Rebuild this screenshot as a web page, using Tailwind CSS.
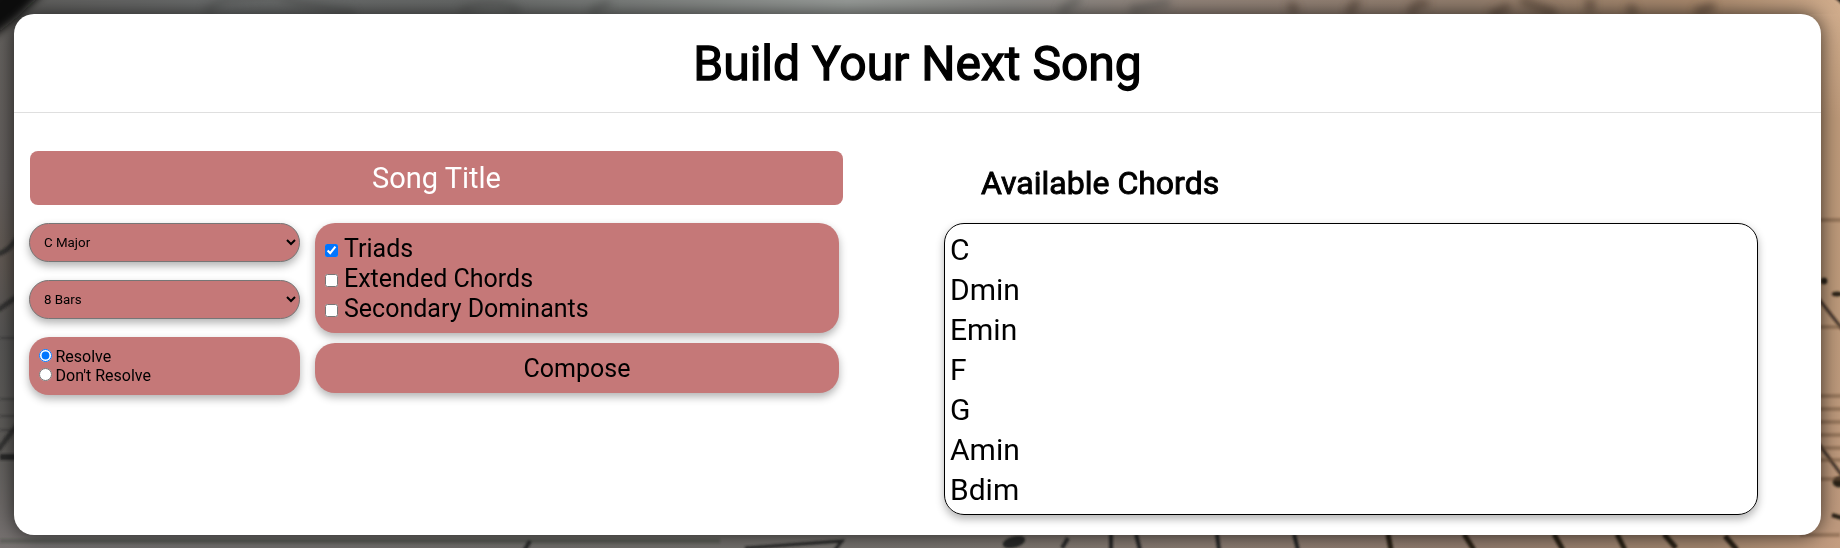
<!DOCTYPE html>
<html lang="en">
<head>
<meta charset="utf-8">
<title>Build Your Next Song</title>
<script src="https://cdn.jsdelivr.net/npm/@tailwindcss/browser@4"></script>
</head>
<body class="relative h-[548px] w-[1840px] overflow-hidden bg-[#6d6865] font-['Roboto',sans-serif] text-black">
  <!-- Sheet music backdrop -->
  <svg class="absolute inset-0" width="1840" height="548" viewBox="0 0 1840 548" aria-hidden="true">
    <defs>
      <linearGradient id="top"><stop offset="0" stop-color="#5f5e5c"/><stop offset=".12" stop-color="#6c6e6e"/><stop offset=".25" stop-color="#686a69"/><stop offset=".34" stop-color="#7d807e"/><stop offset=".46" stop-color="#9b9f9c"/><stop offset=".55" stop-color="#8d8c89"/><stop offset=".65" stop-color="#94857b"/><stop offset=".8" stop-color="#95806f"/><stop offset=".92" stop-color="#aa8a6e"/><stop offset="1" stop-color="#d0ac8c"/></linearGradient>
      <linearGradient id="bottom"><stop offset="0" stop-color="#737070"/><stop offset=".3" stop-color="#706e6b"/><stop offset=".5" stop-color="#77736f"/><stop offset=".65" stop-color="#8a7c72"/><stop offset=".8" stop-color="#937d6f"/><stop offset=".93" stop-color="#a4876f"/><stop offset="1" stop-color="#c49d80"/></linearGradient>
      <linearGradient id="left" x2="0" y2="1"><stop offset="0" stop-color="#65625f"/><stop offset=".3" stop-color="#645f5d"/><stop offset=".45" stop-color="#625a54"/><stop offset=".6" stop-color="#585756"/><stop offset=".8" stop-color="#5f5d5a"/><stop offset="1" stop-color="#777271"/></linearGradient>
      <linearGradient id="right" x2="0" y2="1"><stop offset="0" stop-color="#d0ac8c"/><stop offset=".2" stop-color="#bd9979"/><stop offset=".6" stop-color="#bd9a7b"/><stop offset="1" stop-color="#bf9a7e"/></linearGradient>
      <filter id="soft"><feGaussianBlur stdDeviation="1"/></filter>
      <filter id="softer"><feGaussianBlur stdDeviation="4"/></filter>
    </defs>
    <rect width="1840" height="274" fill="url(#top)"/>
    <rect y="274" width="1840" height="274" fill="url(#bottom)"/>
    <rect y="20" width="30" height="528" fill="url(#left)"/>
    <rect x="1810" y="14" width="30" height="520" fill="url(#right)"/>
    <path d="M-10-10H46C30 5 15 22-10 38Z" fill="#080908" filter="url(#softer)"/>
    <path d="M205 12l20-14 50-6 20 10 60 12M460 12q30-18 60 0M590 12l20-10M1060 12l20-14M1130 10l40-8" stroke="#4b4d4c" stroke-width="9" opacity=".45" fill="none" filter="url(#softer)"/>
    <path d="M1290 3l6 10M1358 0l-10 14M1410 14q8-16 18-8M1490 16l20-10M1520 0l36 14M1590-2v14M1628 6l8 8M1695 12l20-6" stroke="#4c3a2e" stroke-width="9" opacity=".6" fill="none" filter="url(#softer)"/>
    <path d="M1828-6Q1840 0 1850 14V-10Z" fill="#201a16" filter="url(#soft)"/>
    <g filter="url(#soft)" fill="none" stroke="#292b29">
      <path d="M-2 254Q12 250 20 232M-2 310l20-14M-2 450l20-26" stroke-width="5" opacity=".8"/>
      <path d="M0 457H20" stroke-width="6"/>
      <path d="M0 338H20M0 399H20M0 416H20M0 430H20" stroke-width="2" opacity=".4"/>
      <path d="M0 541H720" stroke-width="4" opacity=".25"/>
      <path d="M530 541l-6 10M1062 548l6-10M1111 534v16M1136 534l4 16M1217 534l2 16M1294 534l4 16" stroke-width="4"/>
      <path d="M745 548L842 541l-8 10" stroke-width="3"/>
      <ellipse cx="1014" cy="542" rx="11" ry="5" fill="#292b29" transform="rotate(-15 1014 542)"/>
    </g>
    <g filter="url(#soft)" fill="none" stroke="#2c2218">
      <path d="M1388 534l3 16M1464 534l10 16M1554 534l9 16M1617 534l8 16M1664 534l12 14M1725 536l12 14" stroke-width="5"/>
      <path d="M1818 298l25 32M1818 443l25 34" stroke-width="3" opacity=".8"/>
      <ellipse cx="1824" cy="281" rx="3" ry="3" fill="#2c2218"/>
      <ellipse cx="1837" cy="294" rx="5" ry="2" fill="#2c2218"/>
      <ellipse cx="1839" cy="482" rx="6" ry="5" fill="#2c2218"/>
      <path d="M1832 515l10 3" stroke-width="4"/>
    </g>
    <path d="M1818 220h24M1818 327h24M1818 396h24M1818 409h24M1818 422h24M1818 435h24M1818 448h24M1818 460h24M1818 479h24M1800 535h40" stroke="#73543e" stroke-width="4" opacity=".5" filter="url(#soft)"/>
    <path d="M1818 192h24" stroke="#8d6f57" stroke-width="20" opacity=".3" filter="url(#soft)"/>
  </svg>

  <main class="relative mt-[14px] ml-[14px] flex h-[521px] w-[1807px] flex-col rounded-[20px] bg-white shadow-[0_0_20px_rgba(0,0,0,0.7)]">
    <header class="flex h-[99px] items-center justify-center border-b border-[#dfdfdf]">
      <h1 class="pt-[2px] text-[48px] leading-[60px] [-webkit-text-stroke:1.3px_black]">Build Your Next Song</h1>
    </header>

    <div class="flex">
      <section class="ml-[15px] w-[815px] pt-[38px]">
        <div class="ml-px flex h-[54px] w-[813px] items-center justify-center rounded-lg bg-[#c57878] pt-px text-[29px] text-white">Song Title</div>
        <div class="mt-[18px] flex gap-[15px]">
          <div class="flex w-[271px] flex-col gap-[18px]">
            <select class="h-[39px] rounded-[20px] border border-[#767676] bg-[#c57878] px-[10px] text-[13.333px] shadow-[0_4px_8px_rgba(0,0,0,0.3)]"><option>C Major</option></select>
            <select class="h-[39px] rounded-[20px] border border-[#767676] bg-[#c57878] px-[10px] text-[13.333px] shadow-[0_4px_8px_rgba(0,0,0,0.3)]"><option>8 Bars</option></select>
            <div class="flex h-[58px] flex-col rounded-[20px] bg-[#c57878] pt-[10px] pl-[10px] text-[16px] leading-[19px] shadow-[0_4px_8px_rgba(0,0,0,0.3)]">
              <label class="flex gap-[3.5px]"><input type="radio" name="end" checked class="mt-[2px] size-[13px]">Resolve</label>
              <label class="flex gap-[3.5px]"><input type="radio" name="end" class="mt-[2px] size-[13px]">Don't Resolve</label>
            </div>
          </div>
          <div class="flex w-[524px] flex-col gap-[10px] text-[25px]">
            <div class="flex h-[110px] flex-col rounded-[20px] bg-[#c57878] pt-[11px] pl-[10px] leading-[30px] shadow-[0_4px_8px_rgba(0,0,0,0.3)]">
              <label class="flex gap-[6px]"><input type="checkbox" checked class="mt-[10px] size-[13px]">Triads</label>
              <label class="flex gap-[6px]"><input type="checkbox" class="mt-[10px] size-[13px]">Extended Chords</label>
              <label class="flex gap-[6px]"><input type="checkbox" class="mt-[10px] size-[13px]">Secondary Dominants</label>
            </div>
            <button class="h-[50px] rounded-[20px] bg-[#c57878] pt-[2px] shadow-[0_4px_8px_rgba(0,0,0,0.3)]">Compose</button>
          </div>
        </div>
      </section>

      <section class="ml-[100px] w-[814px] pt-[50px]">
        <h2 class="h-[60px] pl-[37px] text-[32px] leading-[40px] [-webkit-text-stroke:0.9px_black]">Available Chords</h2>
        <ul class="h-[292px] rounded-[20px] border border-black pt-[6px] pl-[5px] text-[30px] leading-[40px] shadow-[0_4px_8px_rgba(0,0,0,0.3)]">
          <li>C</li><li>Dmin</li><li>Emin</li><li>F</li><li>G</li><li>Amin</li><li>Bdim</li>
        </ul>
      </section>
    </div>
  </main>
</body>
</html>
